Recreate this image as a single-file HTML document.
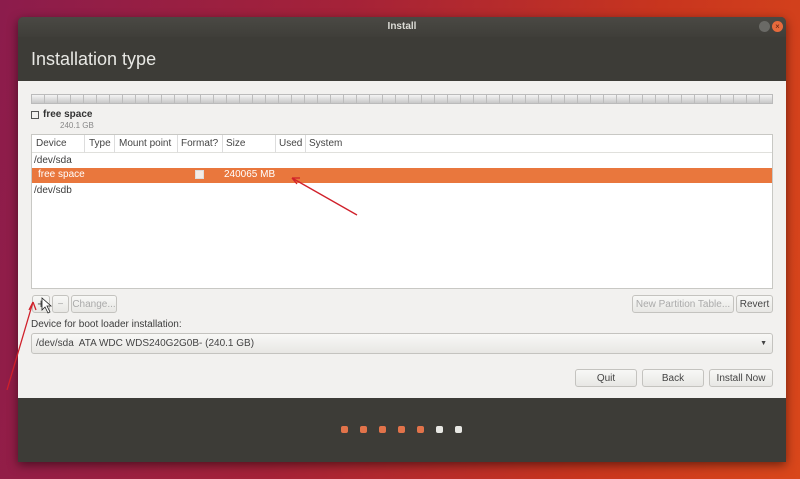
<!DOCTYPE html>
<html><head><meta charset="utf-8"><style>
*{margin:0;padding:0;box-sizing:border-box}
body{width:800px;height:479px;overflow:hidden;position:relative;font-family:"Liberation Sans",sans-serif;background:linear-gradient(100deg,#8c1c4c 0%,#a52238 40%,#c8351e 75%,#d9471b 100%)}
.win{position:absolute;left:18px;top:17px;width:768px;height:445px;background:#3d3c37;border-radius:5px 5px 0 0;box-shadow:0 3px 10px rgba(0,0,0,.5);overflow:hidden}
.tb{height:20px;background:linear-gradient(#4a4944,#3f3e39);color:#dcdcd6;font-size:10px;text-align:center;line-height:20px;font-weight:bold}
.h1{position:absolute;left:13px;top:32px;color:#e8e8e4;font-size:18px}
.ct{position:absolute;left:0;top:64px;width:768px;height:317px;background:#f2f1ef}
.bar{position:absolute;left:13px;top:13px;width:742px;height:10px;border:1px solid #bbb;background-image:repeating-linear-gradient(90deg,transparent 0 12px,#bcbcbc 12px 13px),linear-gradient(#f4f4f4,#c8c8c8)}
.t{position:absolute;font-size:10px;color:#3c3c3c;white-space:nowrap}
.table{position:absolute;left:13px;top:53px;width:742px;height:155px;background:#fff;border:1px solid #c8c8c4}
.hd{height:18px;border-bottom:1px solid #e0e0dc;position:relative}
.hd span{position:absolute;top:3px;font-size:10px;color:#444}
.sep{position:absolute;top:0;height:18px;border-left:1px solid #ddd}
.sel{position:absolute;left:0;top:33px;width:740px;height:15px;background:#e9773d}
.btn{position:absolute;height:18px;border:1px solid #c4c3bf;border-radius:3px;background:linear-gradient(#f8f8f6,#e8e7e4);font-size:10px;color:#444;text-align:center;line-height:17px;white-space:nowrap}
.dis{color:#aaa}
.dot{position:absolute;top:426px;width:7px;height:7px;border-radius:2px;background:#e2734a}
</style></head><body>
<div class="win">
<div class="tb">Install</div>
<div style="position:absolute;left:741px;top:4px;width:11px;height:11px;border-radius:50%;background:#6a6a66"></div>
<div style="position:absolute;left:754px;top:4px;width:11px;height:11px;border-radius:50%;background:#e66a3c;color:#5a2010;font-size:8px;line-height:11px;text-align:center">×</div>
<div class="h1">Installation type</div>
<div class="ct">
<div class="bar"></div>
<div style="position:absolute;left:13px;top:30px;width:8px;height:8px;border:1px solid #555"></div>
<div class="t" style="left:25px;top:28px;font-weight:bold;color:#333">free space</div>
<div class="t" style="left:42px;top:40px;font-size:8px;color:#888">240.1 GB</div>
<div class="table">
<div class="hd">
<span style="left:4px">Device</span><div class="sep" style="left:52px"></div>
<span style="left:57px">Type</span><div class="sep" style="left:82px"></div>
<span style="left:87px">Mount point</span><div class="sep" style="left:145px"></div>
<span style="left:149px">Format?</span><div class="sep" style="left:190px"></div>
<span style="left:194px">Size</span><div class="sep" style="left:243px"></div>
<span style="left:247px">Used</span><div class="sep" style="left:273px"></div>
<span style="left:277px">System</span>
</div>
<div class="t" style="left:2px;top:20px">/dev/sda</div>
<div class="sel">
<div class="t" style="left:6px;top:1px;color:#fff">free space</div>
<div style="position:absolute;left:163px;top:2px;width:9px;height:9px;background:#f3ece7;border:1px solid #ddd"></div>
<div class="t" style="left:192px;top:1px;color:#fff">240065 MB</div>
</div>
<div class="t" style="left:2px;top:50px">/dev/sdb</div>
</div>
<div class="btn" style="left:14px;top:214px;width:18px;font-size:13px;line-height:15px">+</div>
<div class="btn dis" style="left:34px;top:214px;width:17px">−</div>
<div class="btn dis" style="left:53px;top:214px;width:46px">Change...</div>
<div class="btn dis" style="left:614px;top:214px;width:102px">New Partition Table...</div>
<div class="btn" style="left:718px;top:214px;width:37px">Revert</div>
<div class="t" style="left:13px;top:238px">Device for boot loader installation:</div>
<div class="btn" style="left:13px;top:252px;width:742px;height:21px;text-align:left;padding-left:4px;line-height:19px">/dev/sda&nbsp; ATA WDC WDS240G2G0B- (240.1 GB)<span style="position:absolute;right:5px;font-size:7px">▼</span></div>
<div class="btn" style="left:557px;top:288px;width:62px;height:18px">Quit</div>
<div class="btn" style="left:624px;top:288px;width:62px;height:18px">Back</div>
<div class="btn" style="left:691px;top:288px;width:64px;height:18px">Install Now</div>
</div>
</div>
<div class="dot" style="left:341px"></div>
<div class="dot" style="left:360px"></div>
<div class="dot" style="left:379px"></div>
<div class="dot" style="left:398px"></div>
<div class="dot" style="left:417px"></div>
<div class="dot" style="left:436px;background:#e8e8e4"></div>
<div class="dot" style="left:455px;background:#e8e8e4"></div>
<svg width="800" height="479" style="position:absolute;left:0;top:0" fill="none" stroke="#d0202a" stroke-width="1.3">
<path d="M357 215 L292 178"/><path d="M292 178 L300 178 M292 178 L297 184" />
<path d="M7 390 L33 302"/><path d="M33 302 L29 310 M33 302 L36 310"/>
<path d="M42 298 L42 310 L45 307 L48 313 L50 312 L47 306 L51 306 Z" fill="#fff" stroke="#222" stroke-width="0.8"/>
</svg>
</body></html>
